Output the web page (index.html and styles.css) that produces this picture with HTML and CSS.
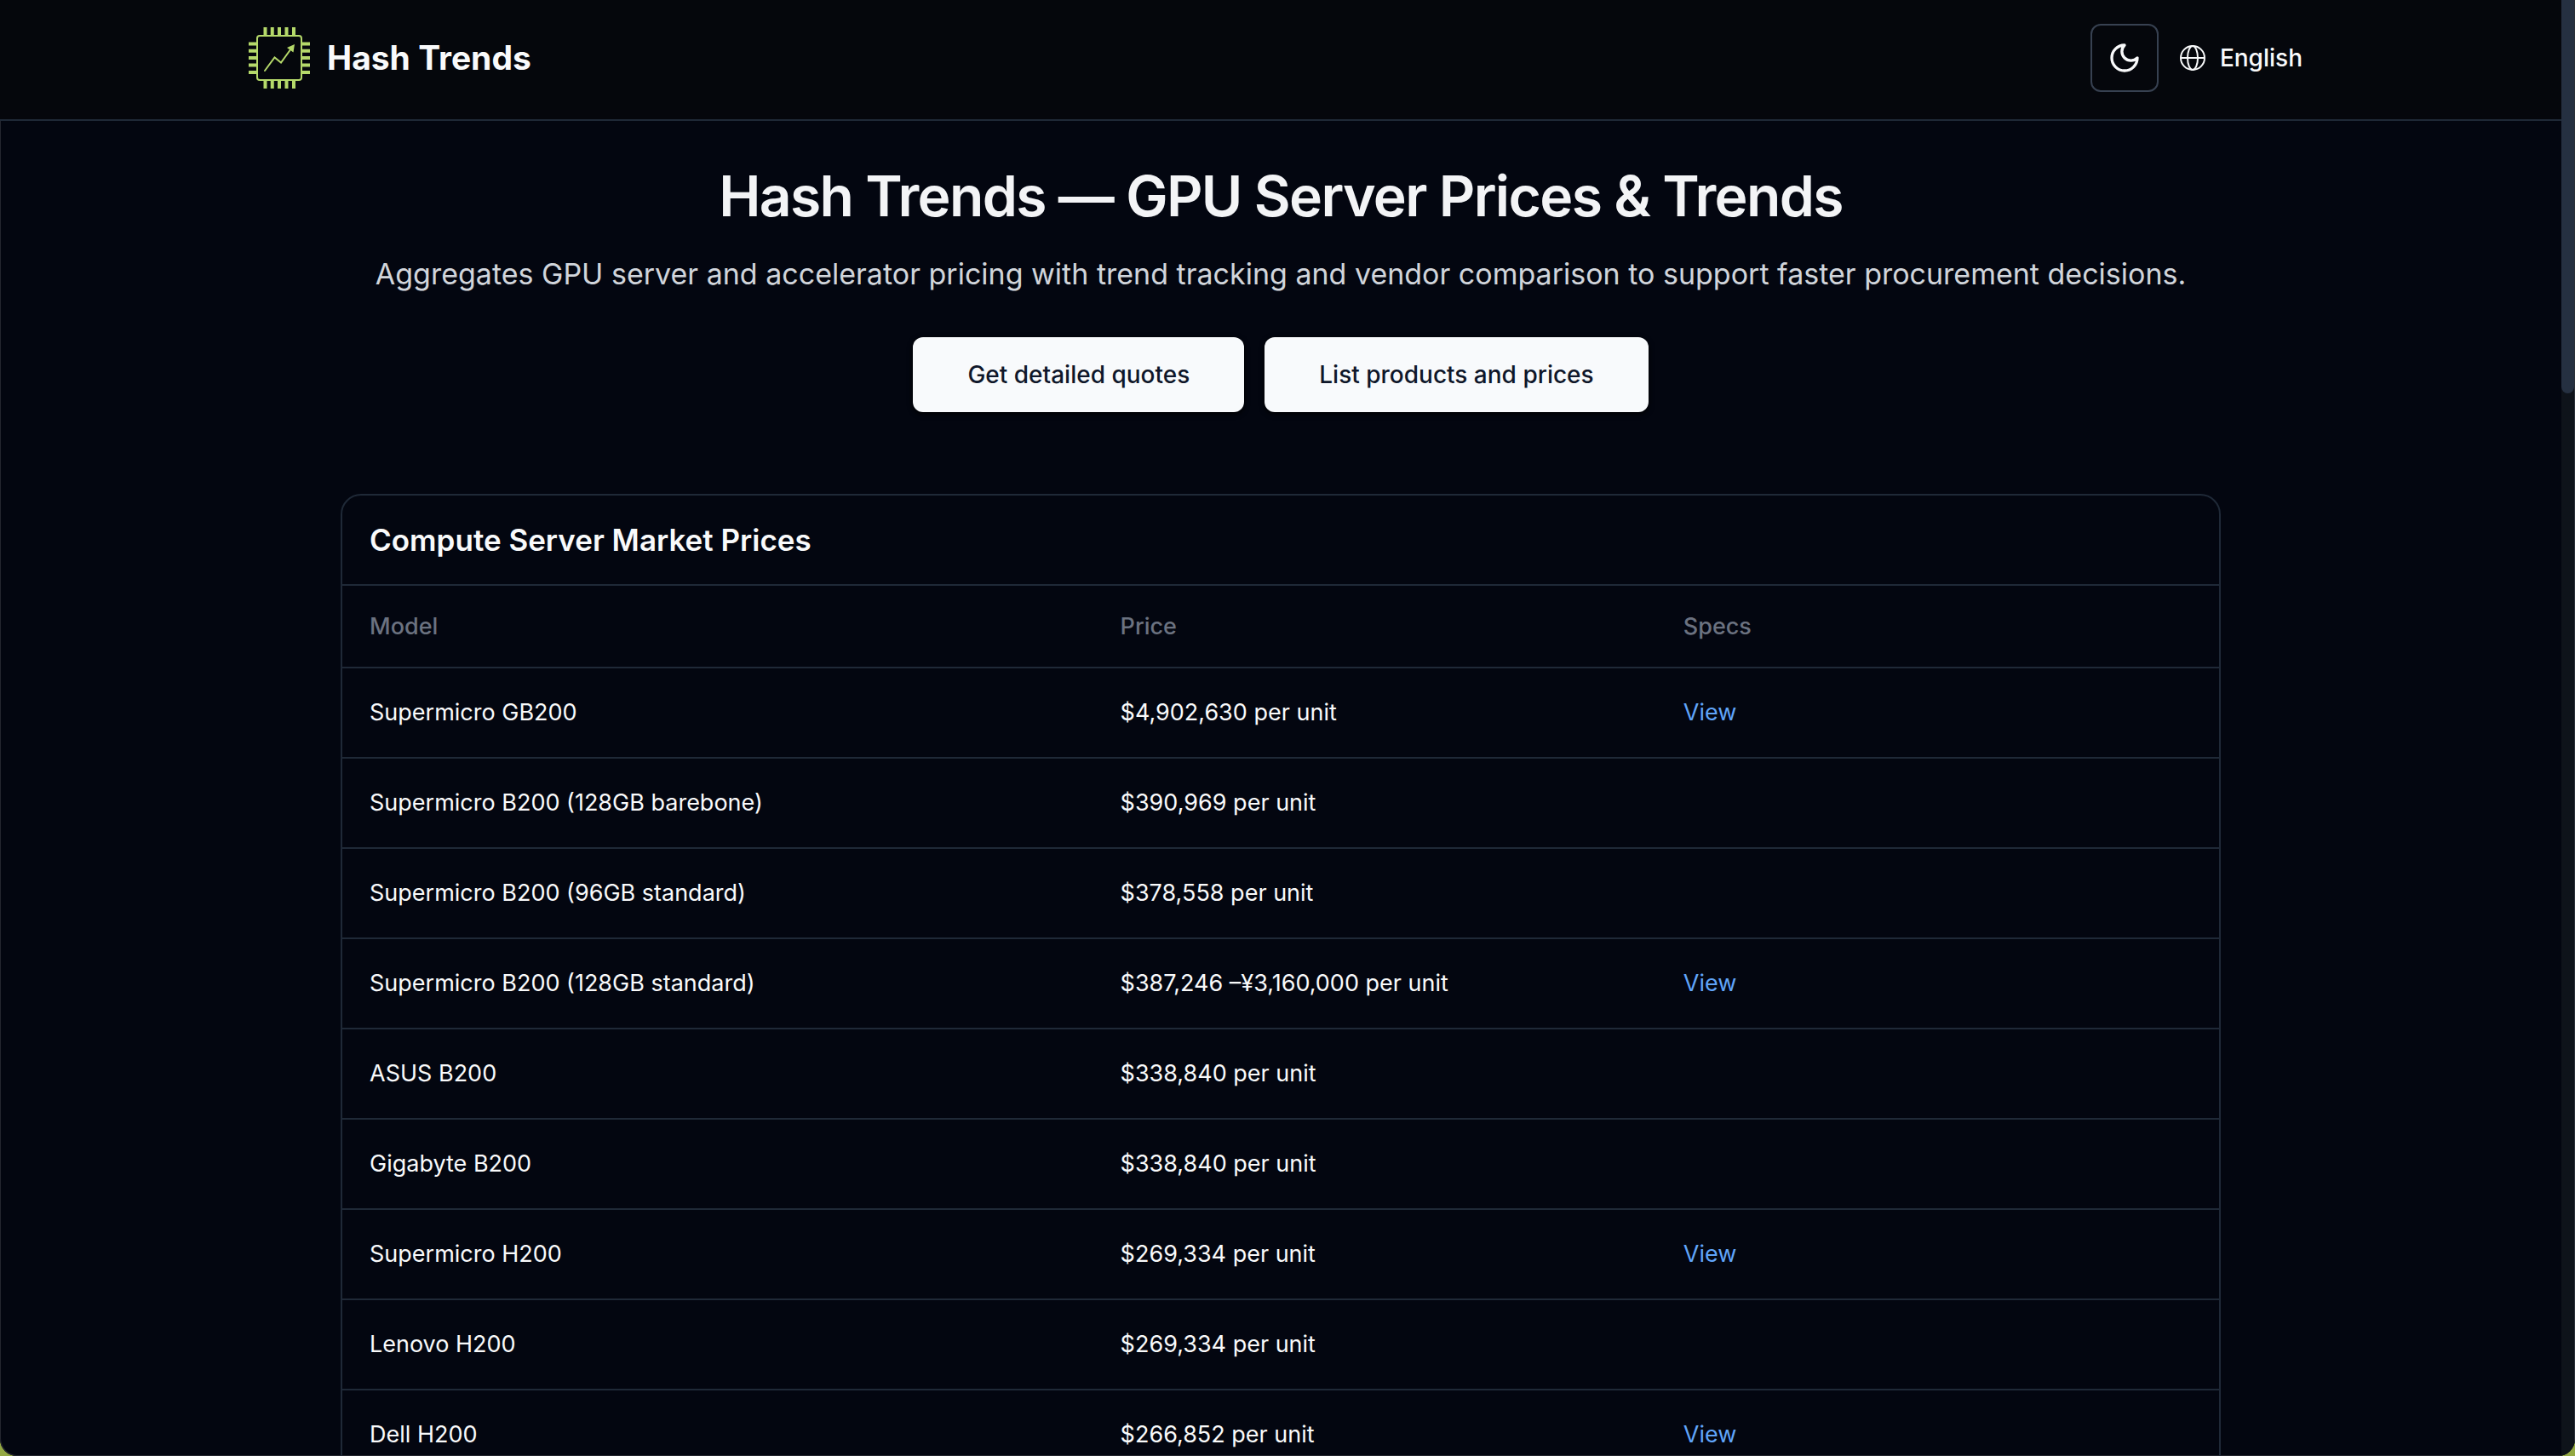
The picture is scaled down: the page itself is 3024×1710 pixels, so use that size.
FILE: index.html
```html
<!DOCTYPE html>
<html lang="en">
<head>
<meta charset="utf-8">
<meta name="viewport" content="width=device-width, initial-scale=1">
<title>Hash Trends</title>
<link rel="stylesheet" href="styles.css">
</head>
<body>
<div class="window">
  <div class="page">
    <header class="site-header">
      <div class="site-header-inner">
        <a class="brand" href="#">
          <svg class="brand-logo" viewBox="0 0 80 80" fill="none" stroke="#b5d96a" aria-hidden="true">
            <rect x="14" y="14" width="52" height="52" rx="3" stroke-width="2"/>
            <path stroke-width="4" d="M23.500 4v9M31.750 4v9M40 4v9M48.500 4v9M57 4v9M23.500 67v9M31.750 67v9M40 67v9M48.500 67v9M57 67v9M4 23.500h9M4 31.750h9M4 40h9M4 48.500h9M4 57h9M67 23.500h9M67 31.750h9M67 40h9M67 48.500h9M67 57h9"/>
            <path stroke-width="2" stroke-linecap="round" d="M23 55L34.500 39.500L42 45.500L54 29"/>
            <path fill="#b5d96a" stroke="none" d="M58 24L49 28L56.500 33.500Z"/>
          </svg>
          <span>Hash Trends</span>
        </a>
        <div class="header-tools">
          <button class="theme-button" type="button" aria-label="Toggle theme">
            <svg viewBox="0 0 24 24" fill="none" stroke="currentColor" stroke-width="2" stroke-linecap="round" stroke-linejoin="round" aria-hidden="true"><path d="M12 3a6 6 0 0 0 9 9 9 9 0 1 1-9-9Z"/></svg>
          </button>
          <button class="language-button" type="button">
            <svg viewBox="0 0 32 32" fill="none" stroke="currentColor" stroke-width="2" aria-hidden="true"><circle cx="16" cy="16" r="14"/><ellipse cx="16" cy="16" rx="6" ry="14"/><path d="M2 16h28"/></svg>
            <span>English</span>
          </button>
        </div>
      </div>
    </header>
    <main class="content">
      <section class="hero">
        <h1>Hash Trends — GPU Server Prices &amp; Trends</h1>
        <p>Aggregates GPU server and accelerator pricing with trend tracking and vendor comparison to support faster procurement decisions.</p>
        <div class="hero-actions">
          <button class="action" type="button">Get detailed quotes</button>
          <button class="action" type="button">List products and prices</button>
        </div>
      </section>
      <section class="card">
        <h2>Compute Server Market Prices</h2>
        <table class="prices">
          <thead>
            <tr><th class="col-model">Model</th><th class="col-price">Price</th><th class="col-specs">Specs</th></tr>
          </thead>
          <tbody>
            <tr><td>Supermicro GB200</td><td>$4,902,630 per unit</td><td><a href="#">View</a></td></tr>
            <tr><td>Supermicro B200 (128GB barebone)</td><td>$390,969 per unit</td><td></td></tr>
            <tr><td>Supermicro B200 (96GB standard)</td><td>$378,558 per unit</td><td></td></tr>
            <tr><td>Supermicro B200 (128GB standard)</td><td>$387,246 –¥3,160,000 per unit</td><td><a href="#">View</a></td></tr>
            <tr><td>ASUS B200</td><td>$338,840 per unit</td><td></td></tr>
            <tr><td>Gigabyte B200</td><td>$338,840 per unit</td><td></td></tr>
            <tr><td>Supermicro H200</td><td>$269,334 per unit</td><td><a href="#">View</a></td></tr>
            <tr><td>Lenovo H200</td><td>$269,334 per unit</td><td></td></tr>
            <tr><td>Dell H200</td><td>$266,852 per unit</td><td><a href="#">View</a></td></tr>
          </tbody>
        </table>
      </section>
    </main>
  </div>
  <div class="scroll-track"><div class="scroll-thumb"></div></div>
</div>
</body>
</html>
```
FILE: styles.css
```css
* { box-sizing: border-box; }

html { background: #94a844; }

body {
  margin: 0;
  color: #f9fafb;
  font: 400 28px/40px Inter, "Noto Sans CJK SC", sans-serif;
}

button { font: inherit; cursor: pointer; }
svg { display: block; }

.window {
  display: flex;
  height: 100vh;
  overflow: hidden;
  background: #030610;
  border-radius: 0 0 20px 20px;
  box-shadow: inset 1px -1px 0 #24262f;
}

.page { flex: 1; min-width: 0; }

.scroll-track { width: 16px; background: #0e131a; border-right: 1px solid #2b3038; }
.scroll-thumb { height: 27%; background: #253041; border-radius: 0 0 8px 8px; }

.site-header { background: #05070c; border-bottom: 2px solid #1f2937; }

.site-header-inner {
  display: flex;
  align-items: center;
  justify-content: space-between;
  max-width: 2560px;
  margin: 0 auto;
  padding: 28px 64px 32px;
}

.brand {
  display: flex;
  align-items: center;
  gap: 16px;
  color: inherit;
  font-size: 39px;
  font-weight: 700;
  line-height: 56px;
  text-decoration: none;
}
.brand-logo { width: 80px; height: 80px; }

.header-tools { display: flex; align-items: center; gap: 8px; }

.theme-button {
  display: grid;
  place-items: center;
  width: 80px;
  height: 80px;
  padding: 0;
  color: inherit;
  background: transparent;
  border: 2px solid #374151;
  border-radius: 12px;
}
.theme-button svg { width: 40px; height: 40px; }

.language-button {
  display: flex;
  align-items: center;
  gap: 16px;
  padding: 16px;
  color: inherit;
  font-weight: 500;
  background: transparent;
  border: 0;
}
.language-button svg { width: 32px; height: 32px; }

.content { max-width: 2304px; margin: 0 auto; padding: 48px; }

.hero { text-align: center; }

h1 {
  margin: 0 0 24px;
  color: #f3f4f6;
  font-size: 66px;
  font-weight: 600;
  line-height: 80px;
  letter-spacing: -0.025em;
}

.hero p {
  margin: 0 0 46px;
  color: #d1d5db;
  font-size: 34px;
  line-height: 56px;
}

.hero-actions { display: flex; justify-content: center; gap: 24px; margin-bottom: 96px; }

.action {
  padding: 24px 64px;
  color: #0f172a;
  font-weight: 500;
  background: #f8fafc;
  border: 0;
  border-radius: 12px;
  box-shadow: 0 2px 6px #000000;
}

.card { overflow: hidden; border: 2px solid #1f2937; border-radius: 24px; }

.card h2 {
  margin: 0;
  padding: 24px 32px;
  font-size: 35px;
  font-weight: 600;
  line-height: 56px;
}

.prices { width: 100%; table-layout: fixed; border-spacing: 0; font-size: 27px; }
.prices th, .prices td { padding: 32px; border-top: 2px solid #1f2937; text-align: left; }
.prices th { padding: 28px 32px 27px; color: #6b7280; font-weight: 500; }
.prices a { color: #60a5fa; text-decoration: none; }
.col-model { width: 40%; }
.col-price, .col-specs { width: 30%; }
```
